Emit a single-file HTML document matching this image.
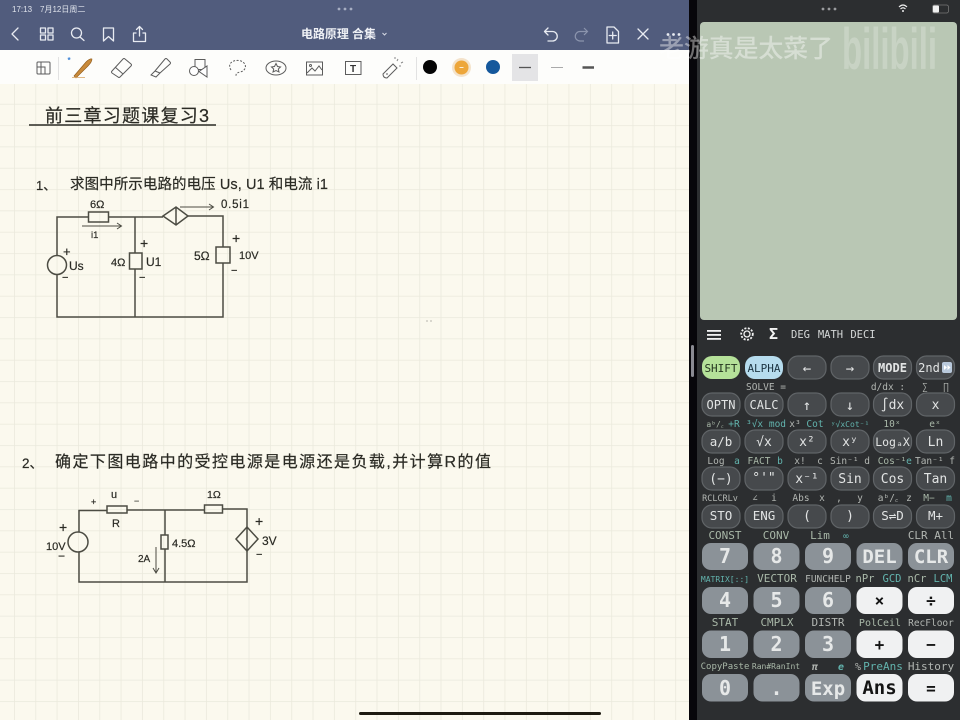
<!DOCTYPE html>
<html><head><meta charset="utf-8"><style>
html,body{margin:0;padding:0;background:#000;width:960px;height:720px;overflow:hidden}
svg{display:block;filter:blur(.3px)}
text{font-family:"Liberation Sans","Noto Sans CJK SC",sans-serif}
.hw text{fill:#2b2b25;stroke:#2b2b25;stroke-width:.2;font-family:"Liberation Sans","Noto Sans CJK SC",sans-serif}
.w{fill:none;stroke:#4c4c43;stroke-width:1.5}
.i{fill:none;stroke:#5c5c5c;stroke-width:1}
.n{fill:none;stroke:#e8ebf2;stroke-width:1.3;stroke-linecap:round;stroke-linejoin:round}
.k{fill:#46494c;stroke:#606467;stroke-width:1.2}
.m text,.l text,.t,.t text{font-family:"DejaVu Sans Mono","Liberation Mono",monospace;text-anchor:middle}
.m text{fill:#e2e4e4;font-size:12px}
.g{fill:#8b9298}
.kw{fill:#f0f1f2}
.big text{font-family:"DejaVu Sans Mono","Liberation Mono",monospace;text-anchor:middle;font-weight:700;font-size:20px;fill:#e6e8e8}
.dk text{fill:#141414}
.l text{font-size:9.5px;fill:#a9b8a8}
.l .c{fill:#62b3ad}
.l .s{fill:#b2b6b2}
</style></head><body>
<svg width="960" height="720" viewBox="0 0 960 720" xmlns="http://www.w3.org/2000/svg">
<defs>
<pattern id="gr" x="14" y="82.5" width="21.33" height="21.33" patternUnits="userSpaceOnUse">
<rect width="21.33" height="21.33" fill="#fbf9ee"/>
<path d="M0 0V21.33M0 0H21.33" stroke="#eae9dc" stroke-width="1.5" fill="none"/>
</pattern>
</defs>
<rect width="960" height="720" fill="#07060a"/>

<!-- left app -->
<rect x="0" y="0" width="689" height="50" fill="#515c7d"/>
<rect x="0" y="50" width="689" height="34" fill="#fdfdfb"/>
<rect x="0" y="84" width="689" height="636" fill="url(#gr)"/>

<text x="12" y="12" font-size="8" fill="#dfe3ec">17:13</text>
<text x="40" y="12" font-size="8" fill="#dfe3ec">7月12日周二</text>
<g fill="#a7aec2"><circle cx="339" cy="9" r="1.4"/><circle cx="345" cy="9" r="1.4"/><circle cx="351" cy="9" r="1.4"/></g>

<path class="n" d="M18 28L12 34L18 40"/>
<g class="n" stroke-width="1.1"><rect x="40.5" y="28" width="5" height="5"/><rect x="48" y="28" width="5" height="5"/><rect x="40.5" y="35" width="5" height="5"/><rect x="48" y="35" width="5" height="5"/></g>
<circle class="n" cx="76.5" cy="33" r="5"/><path class="n" d="M80 37L84 40.5"/>
<path class="n" d="M103.5 28H113.5V41L108.5 36.5L103.5 41Z"/>
<path class="n" d="M136 33H133.5V41.5H145.5V33H143M139.5 36V27M136.5 29.5L139.5 26.5L142.5 29.5"/>
<text x="301" y="38" font-size="12" font-weight="700" fill="#eef0f5" textLength="75">电路原理 合集</text>
<path d="M382.5 33L384.5 35L386.5 33" fill="none" stroke="#d5d9e4" stroke-width="1"/>

<path class="n" d="M548 28L544.5 31.5L548 35M545 31.5H552.5A4.5 4.5 0 0 1 552.5 41H548"/>
<path d="M584 28L587.5 31.5L584 35M587 31.5H580A4.5 4.5 0 0 0 580 41H584" fill="none" stroke="#8b94ad" stroke-width="1.2"/>
<path class="n" d="M607 27H614L618.5 31.5V43H607ZM612.7 32V39M609.2 35.500H616.200"/>
<path class="n" d="M638 29L648 39M648 29L638 39"/>
<g fill="#e8ebf2"><circle cx="668" cy="34.500" r="1.400"/><circle cx="673.500" cy="34.500" r="1.400"/><circle cx="679" cy="34.500" r="1.400"/></g>

<!-- toolbar icons -->
<g class="i">
<rect x="37" y="62" width="13" height="12" rx="1"/><path d="M41 62V74M37 67H45V74"/>
<path d="M58.500 57V80" stroke="#e2e2e2"/>
<path d="M112 71L123 59Q124 58 125 59L131 64Q132 65 131 66L120 77Q119 78 118 77L112 73Q111 72 112 71Z M115 67L123 74"/>
<path d="M151 75L155 71L165 59Q166 58 167 59L170 62Q171 63 170 64L160 73L156 77ZM155 71L160 73"/>
<rect x="195" y="59.500" width="10" height="10"/><circle cx="194" cy="71" r="4.500" fill="#fff"/><path d="M207 66V77L199 71.500Z" fill="#fff"/>
<path d="M231 70C226 62 236 59 241 61C248 64 246 71 240 72C236 73 236 74 236 76" stroke-dasharray="2 1.500"/>
<ellipse cx="276" cy="68" rx="10" ry="7"/><path d="M276 63.500L277.500 66.500L280.500 67L278.300 69L279 72L276 70.500L273 72L273.700 69L271.500 67L274.500 66.500Z"/>
<rect x="306.500" y="62" width="16" height="13"/><path d="M307 73L312 68L315 71L319 66L322 70"/><circle cx="310.500" cy="65.500" r="1"/>
<rect x="345.500" y="61.500" width="15.500" height="13"/>
<path d="M383 74L393 64L397 68L387 78Q383 78 383 74Z M386 74H388"/>
<path d="M397 61L398 59M401 63L403 62M395 59V57M399 66H401" stroke="#888"/>
<path d="M416.500 57V80" stroke="#e2e2e2"/>
</g>
<text x="353" y="72" font-size="10" font-weight="700" text-anchor="middle" fill="#333">T</text>
<text x="69" y="63" font-size="8" font-weight="700" text-anchor="middle" fill="#3b82d6">*</text>
<path d="M74 76L86 62Q90 58 92 59Q92 62 88 66L76 78Z" fill="#c98a3a" stroke="#8d5a1c" stroke-width=".6"/>
<path d="M72 77.500H85" stroke="#d9a86a" stroke-width=".8"/>

<circle cx="430" cy="67" r="7" fill="#050505"/>
<circle cx="461.500" cy="67.500" r="9.500" fill="#f4e3cb"/>
<circle cx="461.500" cy="67.500" r="7" fill="#eda63a"/>
<path d="M459.500 67.500H463.500" stroke="#fff" stroke-width=".8"/>
<circle cx="493" cy="67" r="7" fill="#15589c"/>
<rect x="512" y="54" width="26" height="27" fill="#e4e4e6"/>
<path d="M519 67.500H531" stroke="#555" stroke-width="1.300"/>
<path d="M551 67.500H563" stroke="#aaa" stroke-width="1"/>
<path d="M582.500 67.500H594" stroke="#555" stroke-width="2.500"/>

<!-- handwriting -->
<g class="hw">
<text x="45" y="122" font-size="18" textLength="164" lengthAdjust="spacing">前三章习题课复习3</text>
<text x="36" y="190" font-size="13">1、</text>
<text x="70" y="189" font-size="14.500" textLength="258" lengthAdjust="spacing">求图中所示电路的电压 Us, U1 和电流 i1</text>
<text x="22" y="468" font-size="13.500">2、</text>
<text x="55" y="467" font-size="16" textLength="436" lengthAdjust="spacing">确定下图电路中的受控电源是电源还是负载,并计算R的值</text>

<text x="90" y="208" font-size="11">6Ω</text>
<text x="221" y="208" font-size="11.500" textLength="28">0.5i1</text>
<text x="91" y="238" font-size="9.500">i1</text>
<text x="63" y="256" font-size="13">+</text>
<text x="69" y="270" font-size="12">Us</text>
<text x="62" y="281" font-size="11">−</text>
<text x="111" y="266" font-size="11">4Ω</text>
<text x="146" y="266" font-size="12">U1</text>
<text x="140" y="248" font-size="14">+</text>
<text x="139" y="281" font-size="11">−</text>
<text x="194" y="260" font-size="12">5Ω</text>
<text x="239" y="259" font-size="11">10V</text>
<text x="232" y="243" font-size="14">+</text>
<text x="231" y="274" font-size="11">−</text>

<text x="111" y="498" font-size="11">u</text>
<text x="91" y="505" font-size="9">+</text>
<text x="134" y="504" font-size="9">−</text>
<text x="112" y="527" font-size="11">R</text>
<text x="207" y="498" font-size="10.500">1Ω</text>
<text x="255" y="526" font-size="14">+</text>
<text x="262" y="545" font-size="12">3V</text>
<text x="256" y="558" font-size="11">−</text>
<text x="59" y="532" font-size="14">+</text>
<text x="46" y="550" font-size="11">10V</text>
<text x="58" y="560" font-size="12">−</text>
<text x="172" y="547" font-size="11">4.5Ω</text>
<text x="138" y="562" font-size="10">2A</text>
</g>
<path d="M29 125H216" stroke="#2b2b25" stroke-width="1.400"/>
<circle cx="427" cy="321" r=".5" fill="#444"/><circle cx="431" cy="321" r=".5" fill="#444"/>

<!-- circuit 1 -->
<g class="w">
<path d="M57 256V217H88M108 217H163M188 216H223V247M223 263V317H57V275M135 217V253M135 269V317"/>
<rect x="88.500" y="212" width="20" height="10"/>
<path d="M163 216L176 207L188 216L176 225ZM176 207V225"/>
<path d="M180 207H213M209 204L213.500 207L209 210" stroke-width="1"/>
<path d="M82 226H121M117 223L121.500 226L117 229" stroke-width="1"/>
<circle cx="57" cy="265" r="9.500"/>
<rect x="129.500" y="253" width="12.500" height="16"/>
<rect x="216" y="247" width="14" height="16"/>
</g>
<!-- circuit 2 -->
<g class="w">
<path d="M79 532V510.500H107M127 510H204M222 509H247V527M247 551V582H79V552M165 510V535M165 549V582"/>
<rect x="107" y="506" width="20" height="7"/>
<rect x="204.500" y="505" width="18" height="8"/>
<circle cx="78" cy="542" r="10"/>
<rect x="161" y="535" width="7" height="14"/>
<path d="M236 539L247 527L258 539L247 551ZM247 527V551"/>
<path d="M156 547V572M153 568L156 573L159 568" stroke-width="1"/>
</g>
<rect x="359" y="712" width="242" height="3" rx="1.500" fill="#1d1a10"/>

<!-- right app -->
<rect x="697" y="0" width="263" height="720" fill="#2c2e30"/>
<rect x="691" y="345" width="3" height="32" rx="1.500" fill="#8a8a92"/>
<g fill="#9a9c9e"><circle cx="823" cy="9" r="1.400"/><circle cx="829" cy="9" r="1.400"/><circle cx="835" cy="9" r="1.400"/></g>
<path d="M899 7Q903 3 907 7M900.500 9Q903 6.500 905.500 9" fill="none" stroke="#eee" stroke-width="1.200"/><circle cx="903" cy="11" r="1" fill="#eee"/>
<rect x="932.500" y="5" width="16" height="8" rx="2" fill="none" stroke="#777" stroke-width=".8"/>
<rect x="933" y="5.500" width="6" height="7" rx="1" fill="#f0f0f0"/>
<rect x="700" y="22" width="257" height="298" rx="4" fill="#b9c7b4"/>

<g fill="#f2f2f2"><rect x="707" y="330" width="14" height="1.800"/><rect x="707" y="334" width="14" height="1.800"/><rect x="707" y="338" width="14" height="1.800"/></g>
<circle cx="747" cy="334" r="3" fill="none" stroke="#f2f2f2" stroke-width="1.300"/>
<circle cx="747" cy="334" r="5.800" fill="none" stroke="#f2f2f2" stroke-width="1.800" stroke-dasharray="2 1.500"/>
<text class="t" x="773.500" y="339" font-size="15" font-weight="700" fill="#f2f2f2">Σ</text>
<g class="t" font-size="10.500" fill="#d5d8d8"><text x="800.500" y="338">DEG</text><text x="830.500" y="338">MATH</text><text x="863" y="338">DECI</text></g>

<!-- upper keys -->
<rect x="702" y="356" width="38" height="23" rx="10" fill="#b5e199"/>
<rect x="745" y="356" width="38" height="23" rx="10" fill="#b6dcee"/>
<g class="k">
<rect x="788" y="356" width="38" height="23" rx="10"/><rect x="831" y="356" width="38" height="23" rx="10"/><rect x="873.500" y="356" width="38" height="23" rx="10"/><rect x="916.500" y="356" width="38" height="23" rx="10"/>
<rect x="702" y="393" width="38" height="23" rx="10"/><rect x="745" y="393" width="38" height="23" rx="10"/><rect x="788" y="393" width="38" height="23" rx="10"/><rect x="831" y="393" width="38" height="23" rx="10"/><rect x="873.500" y="393" width="38" height="23" rx="10"/><rect x="916.500" y="393" width="38" height="23" rx="10"/>
<rect x="702" y="430" width="38" height="23" rx="10"/><rect x="745" y="430" width="38" height="23" rx="10"/><rect x="788" y="430" width="38" height="23" rx="10"/><rect x="831" y="430" width="38" height="23" rx="10"/><rect x="873.500" y="430" width="38" height="23" rx="10"/><rect x="916.500" y="430" width="38" height="23" rx="10"/>
<rect x="702" y="467" width="38" height="23" rx="10"/><rect x="745" y="467" width="38" height="23" rx="10"/><rect x="788" y="467" width="38" height="23" rx="10"/><rect x="831" y="467" width="38" height="23" rx="10"/><rect x="873.500" y="467" width="38" height="23" rx="10"/><rect x="916.500" y="467" width="38" height="23" rx="10"/>
<rect x="702" y="505" width="38" height="23" rx="10"/><rect x="745" y="505" width="38" height="23" rx="10"/><rect x="788" y="505" width="38" height="23" rx="10"/><rect x="831" y="505" width="38" height="23" rx="10"/><rect x="873.500" y="505" width="38" height="23" rx="10"/><rect x="916.500" y="505" width="38" height="23" rx="10"/>
</g>
<g class="m">
<text x="721" y="372" style="fill:#24351f;font-size:11px">SHIFT</text><text x="764" y="372" style="fill:#1c3442;font-size:11px">ALPHA</text>
<text x="807" y="373" style="font-size:14px">←</text><text x="850" y="373" style="font-size:14px">→</text><text x="892.500" y="372" font-weight="700">MODE</text><text x="929" y="372">2nd</text>
<text x="721" y="409">OPTN</text><text x="764" y="409">CALC</text><text x="807" y="410" style="font-size:14px">↑</text><text x="850" y="410" style="font-size:14px">↓</text><text x="892.500" y="409" style="font-size:13px">∫dx</text><text x="935.500" y="409" style="font-size:13px">x</text>
<text x="721" y="446" style="font-size:12.500px">a/b</text><text x="764" y="446" style="font-size:13px">√x</text><text x="807" y="446" style="font-size:13px">x²</text><text x="850" y="446" style="font-size:13px">xʸ</text><text x="892.500" y="446" style="font-size:11.500px">LogₐX</text><text x="935.500" y="446" style="font-size:13px">Ln</text>
<text x="721" y="483" style="font-size:13px">(−)</text><text x="764" y="482" style="font-size:13px">°'"</text><text x="807" y="483" style="font-size:13px">x⁻¹</text><text x="850" y="483" style="font-size:13px">Sin</text><text x="892.500" y="483" style="font-size:13px">Cos</text><text x="935.500" y="483" style="font-size:13px">Tan</text>
<text x="721" y="520" style="font-size:12.500px">STO</text><text x="764" y="520" style="font-size:12.500px">ENG</text><text x="807" y="520" style="font-size:13px">(</text><text x="850" y="520" style="font-size:13px">)</text><text x="892.500" y="520" style="font-size:12.500px">S⇌D</text><text x="935.500" y="520" style="font-size:12.500px">M+</text>
</g>
<rect x="942" y="362" width="10" height="11" rx="2" fill="#b9c9dc"/>
<path d="M944 365L947 367.500L944 370ZM947.500 365L950.500 367.500L947.500 370Z" fill="#fff"/>

<!-- upper labels -->
<g class="l">
<text class="s" x="766" y="390">SOLVE =</text><text class="s" x="888" y="390">d/dx :</text><text class="s" x="925" y="390">∑</text><text class="s" x="946" y="390">∏</text>
<text x="715" y="427" style="font-size:8px">aᵇ/꜀</text><text class="c" x="734" y="427">+R</text><text class="c" x="766" y="427">³√x mod</text><text class="s" x="795" y="427">x³</text><text class="c" x="815" y="427">Cot</text><text class="c" x="850" y="427" style="font-size:8px">ʸ√xCot⁻¹</text><text x="892" y="427">10ˣ</text><text x="935" y="427">eˣ</text>
<text class="s" x="716" y="464">Log</text><text class="c" x="737" y="464">a</text><text x="759" y="464">FACT</text><text class="c" x="780" y="464">b</text><text class="s" x="800" y="464">x!</text><text class="s" x="820" y="464">c</text><text class="s" x="850" y="464">Sin⁻¹ d</text><text x="892" y="464">Cos⁻¹</text><text class="c" x="909" y="464">e</text><text class="s" x="935" y="464">Tan⁻¹ f</text>
<text class="s" x="720" y="501" style="font-size:8.500px">RCLCRLv</text><text class="s" x="755" y="501">∠</text><text class="s" x="774" y="501">i</text><text class="s" x="801" y="501">Abs</text><text class="s" x="822" y="501">x</text><text class="s" x="839" y="501">,</text><text class="s" x="860" y="501">y</text><text class="s" x="888" y="501">aᵇ/꜀</text><text class="s" x="909" y="501">z</text><text x="929" y="501">M−</text><text class="c" x="949" y="501">m</text>
</g>

<!-- lower keys -->
<g class="g">
<rect x="702" y="543" width="46" height="27" rx="9"/><rect x="753.500" y="543" width="46" height="27" rx="9"/><rect x="805" y="543" width="46" height="27" rx="9"/><rect x="856.500" y="543" width="46" height="27" rx="9"/><rect x="908" y="543" width="46" height="27" rx="9"/>
<rect x="702" y="587" width="46" height="27" rx="9"/><rect x="753.500" y="587" width="46" height="27" rx="9"/><rect x="805" y="587" width="46" height="27" rx="9"/>
<rect x="702" y="630.500" width="46" height="27.500" rx="9"/><rect x="753.500" y="630.500" width="46" height="27.500" rx="9"/><rect x="805" y="630.500" width="46" height="27.500" rx="9"/>
<rect x="702" y="674" width="46" height="27.500" rx="9"/><rect x="753.500" y="674" width="46" height="27.500" rx="9"/><rect x="805" y="674" width="46" height="27.500" rx="9"/>
</g>
<g class="kw">
<rect x="856.500" y="587" width="46" height="27" rx="9"/><rect x="908" y="587" width="46" height="27" rx="9"/>
<rect x="856.500" y="630.500" width="46" height="27.500" rx="9"/><rect x="908" y="630.500" width="46" height="27.500" rx="9"/>
<rect x="856.500" y="674" width="46" height="27.500" rx="9"/><rect x="908" y="674" width="46" height="27.500" rx="9"/>
</g>
<g class="big">
<text x="725" y="563">7</text><text x="776.500" y="563">8</text><text x="828" y="563">9</text><text x="879.500" y="563" style="font-size:19px">DEL</text><text x="931" y="563" style="font-size:19px">CLR</text>
<text x="725" y="607">4</text><text x="776.500" y="607">5</text><text x="828" y="607">6</text>
<text x="725" y="651">1</text><text x="776.500" y="651">2</text><text x="828" y="651">3</text>
<text x="725" y="695">0</text><text x="776.500" y="695">.</text><text x="828" y="695" style="font-size:19px">Exp</text>
</g>
<g class="big dk">
<text x="879.500" y="606" style="font-size:16px">×</text><text x="931" y="606" style="font-size:16px">÷</text>
<text x="879.500" y="650" style="font-size:16px">+</text><text x="931" y="650" style="font-size:16px">−</text>
<text x="879.500" y="694" style="font-size:19px">Ans</text><text x="931" y="694" style="font-size:16px">=</text>
</g>

<!-- lower labels -->
<g class="l">
<text x="725" y="539" style="font-size:11px">CONST</text><text x="776" y="539" style="font-size:11px">CONV</text><text x="820" y="539" style="font-size:11px">Lim</text><text class="c" x="846" y="539">∞</text><text class="s" x="931" y="539" style="font-size:11px">CLR All</text>
<text class="c" x="725" y="582" style="font-size:8px">MATRIX[::]</text><text x="777" y="582" style="font-size:11px">VECTOR</text><text class="s" x="828" y="582" style="font-size:9.500px">FUNCHELP</text><text x="865" y="582" style="font-size:10.500px">nPr</text><text class="c" x="892" y="582" style="font-size:10.500px">GCD</text><text x="917" y="582" style="font-size:10.500px">nCr</text><text class="c" x="943" y="582" style="font-size:10.500px">LCM</text>
<text x="725" y="626" style="font-size:11px">STAT</text><text x="777" y="626" style="font-size:11px">CMPLX</text><text class="s" x="828" y="626" style="font-size:11px">DISTR</text><text x="880" y="626" style="font-size:10px">PolCeil</text><text class="s" x="931" y="626" style="font-size:9.500px">RecFloor</text>
<text x="725" y="669" style="font-size:9px">CopyPaste</text><text x="776" y="669" style="font-size:8px">Ran#RanInt</text><text class="s" x="815" y="670" style="font-size:10px;font-style:italic;font-weight:700">π</text><text class="c" x="841" y="670" style="font-size:10px;font-style:italic;font-weight:700">e</text><text class="s" x="858" y="670" style="font-size:10px">%</text><text class="c" x="883" y="670" style="font-size:11px">PreAns</text><text class="s" x="931" y="670" style="font-size:11px">History</text>
</g>

<!-- watermark -->
<text x="659" y="57" font-size="25" font-weight="500" fill="#ffffff" fill-opacity=".42" textLength="174" lengthAdjust="spacing" style="font-family:'Noto Sans CJK SC',sans-serif">老游真是太菜了</text>
<text x="842" y="69" font-size="58" font-weight="700" fill="#ffffff" fill-opacity=".22" textLength="95" lengthAdjust="spacingAndGlyphs">bilibili</text>
</svg>
</body></html>
